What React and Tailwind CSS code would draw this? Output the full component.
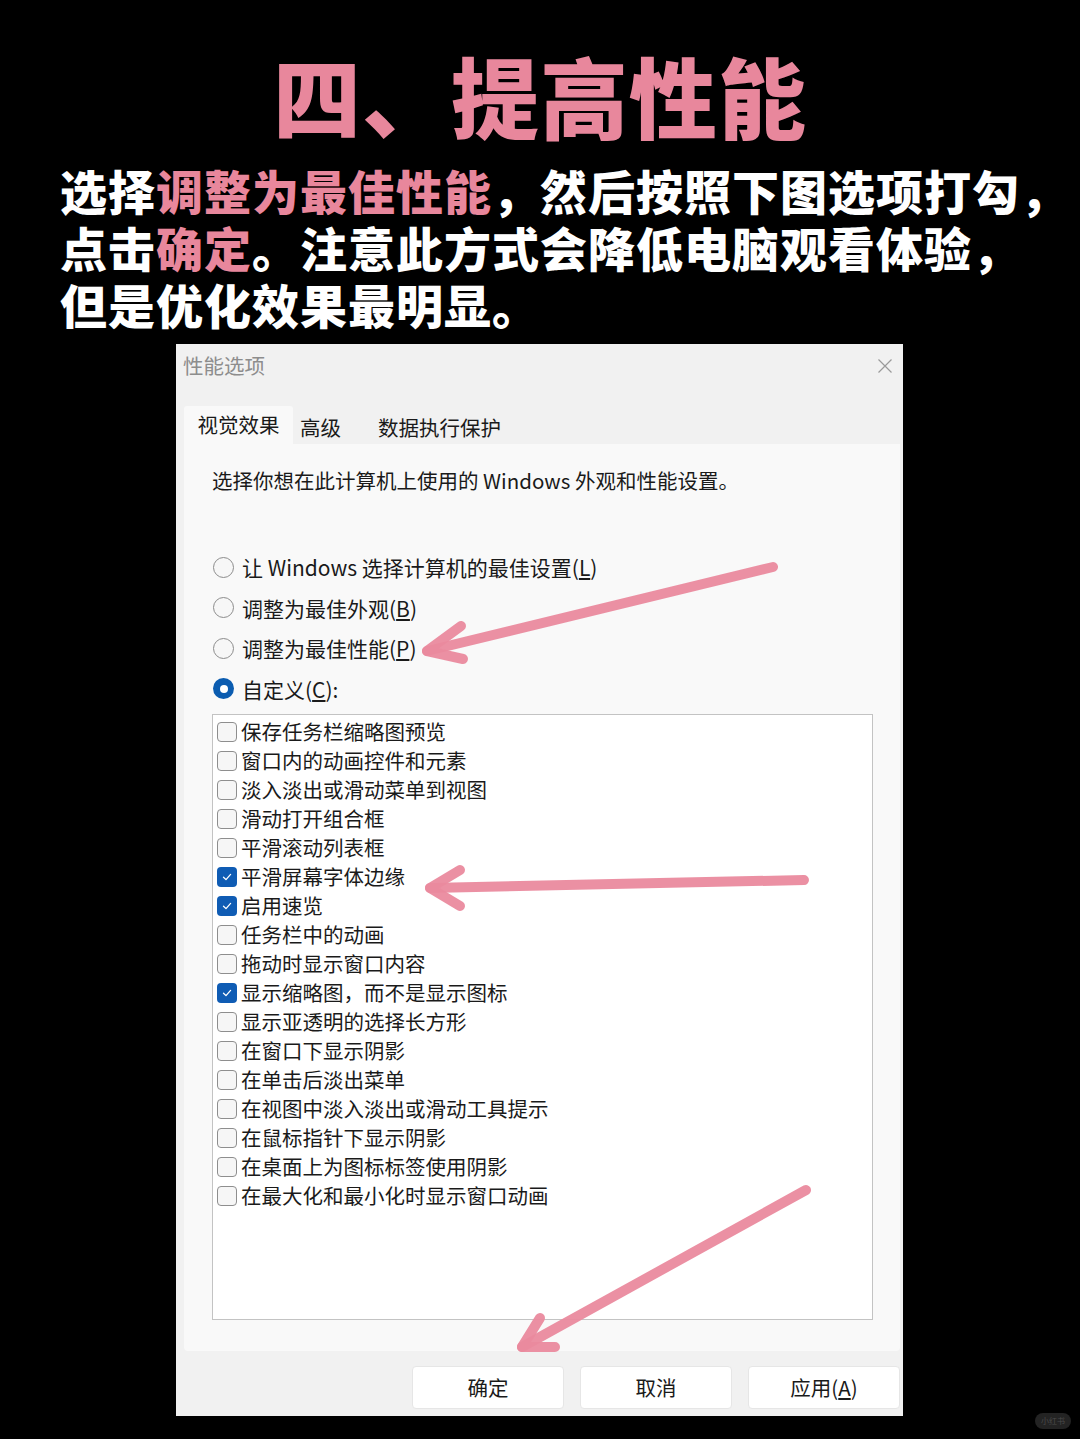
import React from "react";

const FONT = "font-['Noto_Sans_CJK_SC','Noto_Sans',sans-serif]";

const items = [
  ["保存任务栏缩略图预览", false],
  ["窗口内的动画控件和元素", false],
  ["淡入淡出或滑动菜单到视图", false],
  ["滑动打开组合框", false],
  ["平滑滚动列表框", false],
  ["平滑屏幕字体边缘", true],
  ["启用速览", true],
  ["任务栏中的动画", false],
  ["拖动时显示窗口内容", false],
  ["显示缩略图，而不是显示图标", true],
  ["显示亚透明的选择长方形", false],
  ["在窗口下显示阴影", false],
  ["在单击后淡出菜单", false],
  ["在视图中淡入淡出或滑动工具提示", false],
  ["在鼠标指针下显示阴影", false],
  ["在桌面上为图标标签使用阴影", false],
  ["在最大化和最小化时显示窗口动画", false],
];

function Radio({ checked }) {
  if (checked) {
    return (
      <span className="flex h-[21px] w-[21px] shrink-0 items-center justify-center rounded-full bg-[#0b5cb0]">
        <span className="block h-[8px] w-[8px] rounded-full bg-white" />
      </span>
    );
  }
  return <span className="block h-[21px] w-[21px] shrink-0 rounded-full border border-[#8c8c8c] bg-[#f7f7f7]" />;
}

function Check({ checked }) {
  if (checked) {
    return (
      <span className="flex h-[20px] w-[20px] shrink-0 items-center justify-center rounded-[4px] bg-[#0f5cb4]">
        <svg width="12" height="12" viewBox="0 0 12 12">
          <path d="M2.5 6.2 L5 8.6 L9.6 3.4" fill="none" stroke="white" strokeWidth="1.3" strokeLinecap="round" strokeLinejoin="round" />
        </svg>
      </span>
    );
  }
  return <span className="block h-[20px] w-[20px] shrink-0 rounded-[4px] border border-[#8e8e8e] bg-[#f6f6f6]" />;
}

function RadioRow({ checked, children }) {
  return (
    <div className="flex h-[40.5px] items-center">
      <div className="ml-[1px] flex">
        <Radio checked={checked} />
      </div>
      <span className="ml-[8px] text-[21px] leading-[28px] text-[#1a1a1a]">{children}</span>
    </div>
  );
}

export default function App() {
  return (
    <div className={`relative h-[1439px] w-[1080px] overflow-hidden bg-black ${FONT}`}>
      <h1 className="pt-[48px] text-center text-[88px] font-black leading-[92px] tracking-[1px] text-[#e8879c]">
        四、提高性能
      </h1>
      <p className="mt-[21px] whitespace-nowrap pl-[60px] text-[47px] font-black leading-[57px] tracking-[1px] text-white">
        选择<span className="text-[#e8879c]">调整为最佳性能</span>，然后按照下图选项打勾，
        <br />
        点击<span className="text-[#e8879c]">确定</span>。注意此方式会降低电脑观看体验，
        <br />
        但是优化效果最明显。
      </p>

      <div className="ml-[176px] mt-[12px] flex h-[1072px] w-[727px] flex-col bg-[#f1f1f1]">
        {/* title bar */}
        <div className="flex h-[62px] items-start justify-between">
          <span className="ml-[7px] mt-[7px] text-[20.5px] leading-[28px] text-[#8d8d8d]">性能选项</span>
          <svg className="mr-[10px] mt-[14px]" width="16" height="16" viewBox="0 0 16 16">
            <path d="M1.5 1.5 L14.5 14.5 M14.5 1.5 L1.5 14.5" stroke="#9a9a9a" strokeWidth="1.2" fill="none" />
          </svg>
        </div>
        {/* tabs */}
        <div className="flex h-[38px] items-stretch">
          <div className="ml-[8px] flex w-[109px] items-center justify-center rounded-t-[3px] bg-[#f9f9f9] pb-[2px] text-[20.5px] text-[#1a1a1a]">
            视觉效果
          </div>
          <div className="flex items-center pl-[7px] pt-[4px] text-[20.5px] text-[#1a1a1a]">高级</div>
          <div className="flex items-center pl-[37px] pt-[4px] text-[20.5px] text-[#1a1a1a]">数据执行保护</div>
        </div>
        {/* panel */}
        <div className="ml-[8px] mr-[3px] flex h-[907px] flex-col rounded-b-[4px] bg-[#f9f9f9] pl-[28px]">
          <div className="mt-[22px] text-[20.5px] leading-[28px] text-[#1a1a1a]">
            选择你想在此计算机上使用的 Windows 外观和性能设置。
          </div>
          <div className="mt-[53px] flex flex-col">
            <RadioRow>
              让 Windows 选择计算机的最佳设置(<span className="underline underline-offset-2">L</span>)
            </RadioRow>
            <RadioRow>
              调整为最佳外观(<span className="underline underline-offset-2">B</span>)
            </RadioRow>
            <RadioRow>
              调整为最佳性能(<span className="underline underline-offset-2">P</span>)
            </RadioRow>
            <RadioRow checked>
              自定义(<span className="underline underline-offset-2">C</span>):
            </RadioRow>
          </div>
          <div className="mt-[5px] h-[606px] w-[661px] border border-[#c3c3c3] bg-white pl-[4px] pt-[2px]">
            {items.map(([label, checked]) => (
              <div key={label} className="flex h-[29px] items-center">
                <Check checked={checked} />
                <span className="ml-[4px] text-[20.5px] leading-[29px] text-[#1a1a1a]">{label}</span>
              </div>
            ))}
          </div>
        </div>
        {/* buttons */}
        <div className="flex flex-1 items-start justify-end gap-[16px] pr-[3px] pt-[15px]">
          {["确定", "取消"].map((t) => (
            <div key={t} className="flex h-[43px] w-[152px] items-center justify-center rounded-[4px] border border-[#e6e6e6] bg-white text-[20.5px] text-[#1a1a1a]">
              {t}
            </div>
          ))}
          <div className="flex h-[43px] w-[152px] items-center justify-center rounded-[4px] border border-[#e6e6e6] bg-white text-[20.5px] text-[#1a1a1a]">
            应用(<span className="underline underline-offset-2">A</span>)
          </div>
        </div>
      </div>

      {/* arrows overlay */}
      <svg className="pointer-events-none absolute left-0 top-0" width="1080" height="1439" viewBox="0 0 1080 1439">
        <g fill="none" stroke="#ea8a9e" strokeOpacity="0.95" strokeWidth="10" strokeLinecap="round" strokeLinejoin="round">
          <path d="M773 567 L427 651" />
          <path d="M461 626 L427 651 L463 659" />
          <path d="M804 880 L430 888" />
          <path d="M460 870 L430 888 L460 906" />
          <path d="M806 1190 L522 1347" />
          <path d="M540 1318 L522 1347 L555 1347" />
        </g>
      </svg>

      {/* watermark */}
      <div className="absolute bottom-[10px] right-[9px] flex h-[16px] w-[36px] items-center justify-center rounded-full bg-[#232323] text-[8px] leading-none text-[#4a4a4a]">
        小红书
      </div>
    </div>
  );
}
